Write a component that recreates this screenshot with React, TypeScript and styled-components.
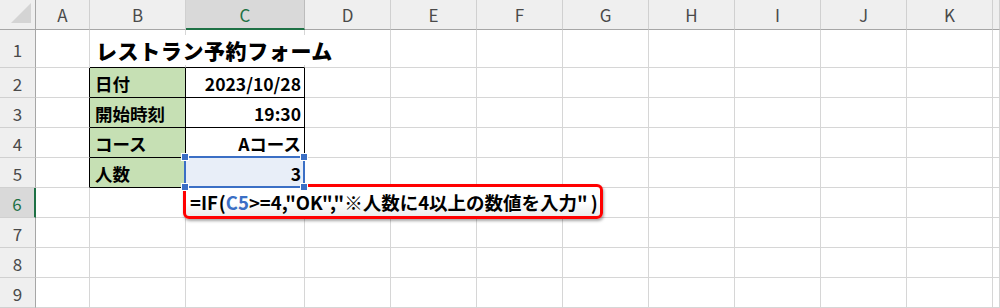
import React from "react";
import styled, { createGlobalStyle } from "styled-components";

const Global = createGlobalStyle`
  html, body { margin: 0; padding: 0; background: #ffffff; }
  body { font-family: "Noto Sans CJK JP", "Noto Sans", sans-serif; }
`;

const GRID = "#d6d6d6";
const HEADER_LINE = "#a6a6a6";
const GREEN = "#1e7145";

type ColDef = { l: string; w: number };
const cols: ColDef[] = [
  { l: "A", w: 54 },
  { l: "B", w: 96 },
  { l: "C", w: 119 },
  { l: "D", w: 86 },
  { l: "E", w: 86 },
  { l: "F", w: 86 },
  { l: "G", w: 86 },
  { l: "H", w: 86 },
  { l: "I", w: 86 },
  { l: "J", w: 86 },
  { l: "K", w: 86 },
  { l: "", w: 7 },
];
const rowHeights = [38, 30, 30, 30, 30, 30, 30, 30, 30, 1];

const Page = styled.div`
  position: relative;
  width: 1000px;
  height: 308px;
  overflow: hidden;
`;

const Sheet = styled.div`
  display: grid;
  grid-template-columns: 36px ${cols.map((c) => `${c.w}px`).join(" ")};
  grid-template-rows: 30px ${rowHeights.map((h) => `${h}px`).join(" ")};
`;

const Corner = styled.div`
  background: #efefef;
  border-right: 1px solid ${HEADER_LINE};
  border-bottom: 1px solid ${HEADER_LINE};
  box-sizing: border-box;
  display: flex;
  align-items: flex-start;
  justify-content: flex-end;
  padding: 2px 3px 0 0;
`;

const ColHeader = styled.div<{ $active?: boolean }>`
  box-sizing: border-box;
  background: ${(p) => (p.$active ? "#d9d9d9" : "#efefef")};
  border-right: 1px solid ${(p) => (p.$active ? "#bcbcbc" : "#d0d0d0")};
  border-bottom: ${(p) => (p.$active ? `2px solid ${GREEN}` : `1px solid ${HEADER_LINE}`)};
  color: ${(p) => (p.$active ? GREEN : "#4a4a4a")};
  font-size: 17px;
  display: flex;
  align-items: center;
  justify-content: center;
  padding-top: ${(p) => (p.$active ? "1px" : "0")};
`;

const RowHeader = styled.div<{ $active?: boolean }>`
  box-sizing: border-box;
  background: ${(p) => (p.$active ? "#d9d9d9" : "#efefef")};
  border-right: ${(p) => (p.$active ? `2px solid ${GREEN}` : `1px solid ${HEADER_LINE}`)};
  border-bottom: 1px solid #d0d0d0;
  color: ${(p) => (p.$active ? GREEN : "#4a4a4a")};
  font-size: 17px;
  display: flex;
  align-items: center;
  justify-content: center;
  padding-top: 2px;
`;

const Cell = styled.div<{
  $fill?: string;
  $right?: string;
  $bottom?: string;
  $align?: "left" | "right";
  $front?: boolean;
}>`
  position: relative;
  box-sizing: border-box;
  background: ${(p) => p.$fill || "transparent"};
  border-right: 1px solid ${(p) => p.$right || GRID};
  border-bottom: 1px solid ${(p) => p.$bottom || GRID};
  display: flex;
  align-items: center;
  justify-content: ${(p) => (p.$align === "right" ? "flex-end" : "flex-start")};
  padding: 2px ${(p) => (p.$align === "right" ? "3px" : "0")} 0 ${(p) => (p.$align === "right" ? "0" : "5px")};
  font-weight: 700;
  font-size: 17.5px;
  color: #000;
  white-space: nowrap;
  z-index: ${(p) => (p.$front ? 2 : "auto")};
`;

const Title = styled.span`
  font-size: 21px;
  font-weight: 800;
  background: #ffffff;
  letter-spacing: 0.6px;
  margin-left: 1px;
`;

const Selection = styled.div`
  position: absolute;
  left: -2px;
  top: -2px;
  right: -1px;
  bottom: -1px;
  border: 2px solid #3b6fc5;
  pointer-events: none;
`;

const Handle = styled.div<{ $x: "l" | "r"; $y: "t" | "b" }>`
  position: absolute;
  width: 6px;
  height: 6px;
  background: #3b6fc5;
  border: 1px solid #ffffff;
  ${(p) => (p.$x === "l" ? "left: -5px;" : "right: -5px;")}
  ${(p) => (p.$y === "t" ? "top: -5px;" : "bottom: -5px;")}
`;

const Callout = styled.div`
  position: absolute;
  left: 183px;
  top: 184px;
  width: 420px;
  height: 35px;
  box-sizing: border-box;
  border: 3px solid #ff0000;
  border-radius: 6px;
  background: linear-gradient(#ffffff 0%, #ffffff 55%, #ebebeb 100%);
  box-shadow: 1px 2px 3px rgba(0, 0, 0, 0.35);
  display: flex;
  align-items: center;
  padding: 1px 0 0 4px;
  font-size: 18.5px;
  font-weight: 700;
  color: #000;
  white-space: nowrap;
`;

const Ref = styled.span`
  color: #3b6fc5;
`;

const Paren = styled.span<{ $side: "open" | "close" }>`
  margin: ${(p) => (p.$side === "open" ? "0 0 0 1px" : "0 0 0 3px")};
`;

const table: Record<string, { text: string; align: "left" | "right" }> = {
  B2: { text: "日付", align: "left" },
  C2: { text: "2023/10/28", align: "right" },
  B3: { text: "開始時刻", align: "left" },
  C3: { text: "19:30", align: "right" },
  B4: { text: "コース", align: "left" },
  C4: { text: "Aコース", align: "right" },
  B5: { text: "人数", align: "left" },
  C5: { text: "3", align: "right" },
};

function cellProps(col: string, row: number) {
  const inTable = (col === "B" || col === "C") && row >= 2 && row <= 5;
  let right: string | undefined;
  let bottom: string | undefined;
  let fill: string | undefined;
  if (inTable) {
    right = "#000";
    bottom = "#000";
    fill = col === "B" ? "#c6e0b4" : undefined;
    if (col === "C" && row === 5) fill = "#e8eef8";
  }
  if (col === "A" && row >= 2 && row <= 5) right = "#000";
  if ((col === "B" || col === "C") && row === 1) bottom = "#000";
  return { right, bottom, fill };
}

export default function App() {
  const cells: React.ReactNode[] = [];
  rowHeights.forEach((h, i) => {
    const row = i + 1;
    cells.push(
      <RowHeader key={`r${row}`} $active={row === 6}>
        {h > 5 ? row : null}
      </RowHeader>
    );
    cols.forEach((c, ci) => {
      const key = `${c.l || "L"}${row}-${ci}`;
      const name = `${c.l}${row}`;
      const p = cellProps(c.l, row);
      const data = table[name];
      cells.push(
        <Cell
          key={key}
          $fill={p.fill}
          $right={p.right}
          $bottom={p.bottom}
          $align={data?.align}
          $front={name === "B1" || name === "C5"}
        >
          {name === "B1" && <Title>レストラン予約フォーム</Title>}
          {data && data.text}
          {name === "C5" && (
            <Selection>
              <Handle $x="l" $y="t" />
              <Handle $x="r" $y="t" />
              <Handle $x="l" $y="b" />
              <Handle $x="r" $y="b" />
            </Selection>
          )}
        </Cell>
      );
    });
  });

  return (
    <Page>
      <Global />
      <Sheet>
        <Corner>
          <svg width="22" height="22" viewBox="0 0 22 22">
            <polygon points="21,1 21,21 1,21" fill="#d4d4d4" />
          </svg>
        </Corner>
        {cols.map((c, ci) => (
          <ColHeader key={`h${ci}`} $active={c.l === "C"}>
            {c.l}
          </ColHeader>
        ))}
        {cells}
      </Sheet>
      <Callout>
        =IF<Paren $side="open">(</Paren>
        <Ref>C5</Ref>&gt;=4,"OK","※人数に4以上の数値を入力"<Paren $side="close">)</Paren>
      </Callout>
    </Page>
  );
}
